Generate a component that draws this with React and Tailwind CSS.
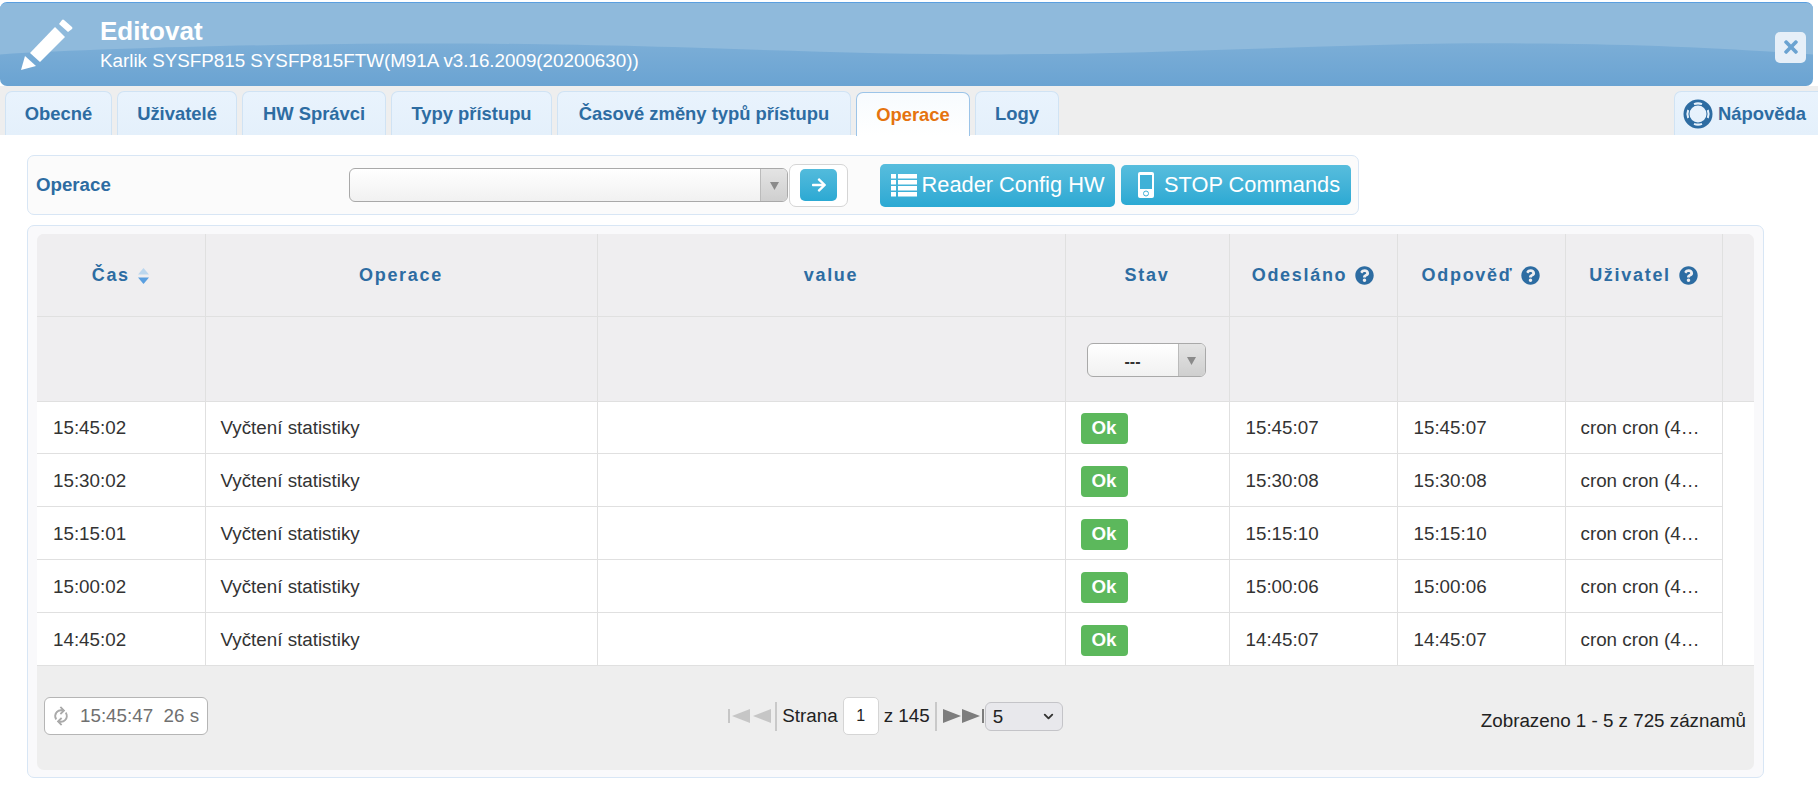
import { FaArrowRight, FaTimes, FaQuestionCircle, FaSync } from 'react-icons/fa';
import { ChevronDown } from 'lucide-react';

const columns = [168, 392, 468, 164, 168, 168, 157, 32];

const rows = [
  ['15:45:02', '15:45:07'],
  ['15:30:02', '15:30:08'],
  ['15:15:01', '15:15:10'],
  ['15:00:02', '15:00:06'],
  ['14:45:02', '14:45:07'],
];

const tabs = [
  ['Obecné', 'w-[107px]'],
  ['Uživatelé', 'w-[120px]'],
  ['HW Správci', 'w-[144px]'],
  ['Typy přístupu', 'w-[161px]'],
  ['Časové změny typů přístupu', 'w-[294px]'],
  ['Operace', 'w-[114px]'],
  ['Logy', 'w-[84px]'],
];

function Pencil() {
  return (
    <svg width="54" height="54" viewBox="0 0 54 54" className="shrink-0" fill="#fff">
      <path d="M1 52 L5 38 L16 48 Z" />
      <path d="M10 35 L35 9 L45 19 L20 44 Z" />
      <path d="M39 6 L42 2 Q43 1 44 2 L52 9 Q53 10 52 11 L48 14 Z" />
    </svg>
  );
}

function LifeRing() {
  return (
    <svg width="30" height="30" viewBox="0 0 30 30" className="shrink-0" fill="none">
      <circle cx="15" cy="15" r="11.500" stroke="#2d6ca2" strokeWidth="6" />
      <path d="M11 5.200A10.500 10.500 0 0 1 19 5.200M11 24.800A10.500 10.500 0 0 0 19 24.800M5.200 11A10.500 10.500 0 0 0 5.200 19M24.800 11A10.500 10.500 0 0 1 24.800 19" stroke="#e6f1fb" strokeWidth="2" />
    </svg>
  );
}

function ListIcon() {
  return (
    <svg width="26" height="23" viewBox="0 0 26 23" className="shrink-0" fill="#fff">
      {[0, 6, 12, 18].map((y) => (
        <g key={y}>
          <rect y={y} width="5" height="4.500" />
          <rect x="7" y={y} width="19" height="4.500" />
        </g>
      ))}
    </svg>
  );
}

function ComboBox({ width, text }) {
  return (
    <div className={`flex h-[34px] ${width} overflow-hidden rounded-md border border-[#a9a9a9] bg-gradient-to-b from-white to-[#f1f1f1]`}>
      <div className="flex-1 text-center text-[16px] leading-[36px] font-bold text-[#333]">{text}</div>
      <div className="flex w-[27px] items-center justify-center border-l border-[#bbb] bg-gradient-to-b from-[#e4e4e4] to-[#cfcfcf]">
        <svg width="9" height="9" viewBox="0 0 9 9"><path d="M0 1h9L4.500 9z" fill="#8a8a8a" /></svg>
      </div>
    </div>
  );
}

function HeadCell({ children, help }) {
  return (
    <th className="border-r border-b border-[#e0e0e0] pt-[2px] text-center text-[18px] font-bold tracking-[1.7px] text-[#2d6ca2]">
      <span className="inline-flex items-center gap-2">
        {children}
        {help && <FaQuestionCircle className="h-[19px] w-[19px]" />}
      </span>
    </th>
  );
}

function PagerArrow({ dark, flip, bar }) {
  const color = dark ? '#7d7d7d' : '#c6c6c6';
  return (
    <svg width={bar ? 23 : 19} height="16" viewBox={bar ? '0 0 23 16' : '0 0 19 16'} className={flip ? '-scale-x-100' : ''}>
      <path d="M0 1 L18 8 L0 15 Z" fill={color} />
      {bar && <rect x="20" y="1" width="2" height="14" fill={color} />}
    </svg>
  );
}

export default function App() {
  const cell = 'border-r border-b border-[#e0e0e0]';

  return (
    <div className="h-[786px] overflow-hidden bg-white font-['Liberation_Sans',Arial,sans-serif]">
      <div className="pt-[2px] pr-[5px]">
        <div className="relative flex h-[84px] items-center overflow-hidden rounded-[7px] border-t border-[#5a9fe0] bg-gradient-to-b from-[#8cb8db] to-[#6aa3d2] pl-[20px]">
          <svg className="absolute inset-0 h-full w-full" viewBox="0 0 1813 84" preserveAspectRatio="none">
            <path d="M0 0H1813V52C1700 44 1600 40 1450 41C1300 43 1150 52 1000 52C800 52 650 40 400 41C250 42 100 46 0 52Z" fill="#8fbadc" />
          </svg>
          <div className="relative">
            <Pencil />
          </div>
          <div className="relative ml-[26px] -mt-[2px] text-white">
            <div className="text-[26px] leading-[30px] font-bold">Editovat</div>
            <div className="mt-[4px] text-[18.800px] leading-[22px]">Karlik SYSFP815 SYSFP815FTW(M91A v3.16.2009(20200630))</div>
          </div>
          <button className="relative mt-[5px] mr-[7px] ml-auto flex h-[31px] w-[31px] items-center justify-center rounded-[5px] bg-[#e6eff8] text-[#6ba3d1]">
            <FaTimes className="h-[20px] w-[20px]" />
          </button>
        </div>
      </div>

      <div className="flex h-[49px] items-end bg-[#eeeeee] pl-[5px]">
        <div className="flex gap-[5px]">
          {tabs.map(([label, width]) => (
            <div
              key={label}
              className={`flex h-[44px] ${width} items-center justify-center rounded-t-[7px] border border-b-0 text-[18.400px] font-bold ${
                label === 'Operace'
                  ? 'relative top-px border-[#9cc4e8] bg-gradient-to-b from-[#f7fbfe] to-white text-[#e5730f]'
                  : 'border-[#d0e3f4] bg-gradient-to-b from-[#e9f3fd] to-[#e4f0fb] text-[#2d6ca2]'
              }`}
            >
              {label}
            </div>
          ))}
        </div>
        <div className="ml-auto flex h-[44px] w-[144px] items-center gap-[5px] rounded-tl-[7px] border-t border-l border-[#d0e3f4] bg-gradient-to-b from-[#e9f3fd] to-[#e4f0fb] pl-[8px] text-[18.400px] font-bold text-[#2d6ca2]">
          <LifeRing />
          Nápověda
        </div>
      </div>

      <div className="px-[27px]">
        <div className="mt-[20px] flex h-[60px] w-[1332px] items-center rounded-[7px] border border-[#d8e6f5] bg-[#fbfbfb] pl-[8px]">
          <div className="w-[313px] text-[18.700px] font-bold text-[#2d6ca2]">Operace</div>
          <ComboBox width="w-[439px]" text="" />
          <div className="ml-px flex h-[43px] w-[59px] items-center justify-center rounded-[7px] border border-[#d5d5d5] bg-white">
            <button className="flex h-[32px] w-[37px] items-center justify-center rounded-[5px] bg-gradient-to-b from-[#52bbdc] to-[#2ba9d3] text-white">
              <FaArrowRight className="h-[16px] w-[16px]" />
            </button>
          </div>
          <button className="ml-[32px] flex h-[43px] w-[235px] items-center justify-center gap-[5px] rounded-[5px] bg-gradient-to-b from-[#57bddd] to-[#2ba9d3] text-[21.800px] text-white">
            <ListIcon />
            Reader Config HW
          </button>
          <button className="ml-[6px] flex h-[40px] w-[230px] items-center justify-center gap-[10px] rounded-[5px] bg-gradient-to-b from-[#57bddd] to-[#2ba9d3] pl-[6px] text-[21.800px] text-white">
            <svg width="16" height="26" viewBox="0 0 16 26">
              <rect width="16" height="26" rx="2" fill="#fff" />
              <rect x="2" y="3" width="12" height="14" fill="#3fb1d7" />
              <circle cx="8" cy="21.500" r="2.500" fill="none" stroke="#3fb1d7" />
            </svg>
            STOP Commands
          </button>
        </div>

        <div className="mt-[10px] h-[553px] w-[1737px] rounded-[7px] border border-[#d8e6f5] bg-[#f9f9fb] px-[9px] pt-[8px]">
          <div className="flex h-[536px] flex-col overflow-hidden rounded-[7px] bg-[#eeeeee]">
            <table className="w-full table-fixed border-collapse text-[18.800px] text-[#333]">
              <colgroup>
                {columns.map((w, i) => (
                  <col key={i} style={{ width: w }} />
                ))}
              </colgroup>
              <thead className="bg-[#efeef0]">
                <tr className="h-[82px]">
                  <HeadCell>
                    Čas
                    <svg width="13" height="18" viewBox="0 0 13 18" className="-ml-[1px]">
                      <path d="M6.500 1 L12 7.500 H1 Z" fill="#bcd7ee" />
                      <path d="M1 10.500 H12 L6.500 17 Z" fill="#5a9fe0" />
                    </svg>
                  </HeadCell>
                  <HeadCell>Operace</HeadCell>
                  <HeadCell>value</HeadCell>
                  <HeadCell>Stav</HeadCell>
                  <HeadCell help>Odesláno</HeadCell>
                  <HeadCell help>Odpověď</HeadCell>
                  <HeadCell help>Uživatel</HeadCell>
                  <th />
                </tr>
                <tr className="h-[85px]">
                  <td className={cell} />
                  <td className={cell} />
                  <td className={cell} />
                  <td className={`${cell} pt-[3px] pl-[21px]`}>
                    <ComboBox width="w-[119px]" text="---" />
                  </td>
                  <td className={cell} />
                  <td className={cell} />
                  <td className={cell} />
                  <td className="border-b border-[#e0e0e0]" />
                </tr>
              </thead>
              <tbody className="bg-white">
                {rows.map(([time, sent], i) => (
                  <tr key={time} className="h-[52.900px]">
                    <td className={`${cell} pt-[2px] pl-[16px]`}>{time}</td>
                    <td className={`${cell} pt-[2px] pl-[15px]`}>Vyčtení statistiky</td>
                    <td className={cell} />
                    <td className={`${cell} pt-[2px] pl-[15px]`}>
                      <span className="flex h-[31px] w-[47px] items-center justify-center rounded-[4px] bg-[#5cb85c] font-bold text-white">Ok</span>
                    </td>
                    <td className={`${cell} pt-[2px] pl-[16px]`}>{sent}</td>
                    <td className={`${cell} pt-[2px] pl-[16px]`}>{sent}</td>
                    <td className={`${cell} truncate pt-[2px] pl-[15px]`}>cron cron (4…</td>
                    <td className={i === rows.length - 1 ? 'border-b border-[#e0e0e0]' : ''} />
                  </tr>
                ))}
              </tbody>
            </table>

            <div className="grid flex-1 grid-cols-[1fr_auto_1fr] items-center pr-[8px] pb-[3px] pl-[7px] text-[18.800px] text-[#222]">
              <div className="flex h-[38px] w-[164px] items-center gap-[12px] rounded-[6px] border border-[#b5b5b5] bg-white pl-[9px] whitespace-pre text-[#707070]">
                <FaSync className="h-[14px] w-[14px] -rotate-45 text-[#aaaaaa]" />
                <span>15:45:47  26 s</span>
              </div>
              <div className="flex items-center">
                <div className="flex items-center gap-[2px] pr-[4px]">
                  <PagerArrow flip bar />
                  <PagerArrow flip />
                </div>
                <div className="mr-[5px] h-[29px] w-[2px] bg-[#c9c9c9]" />
                <span>Strana</span>
                <input
                  readOnly
                  value="1"
                  className="mx-[5px] h-[38px] w-[36px] rounded-[5px] border border-[#d5d5d5] bg-white text-center text-[16px]"
                />
                <span>z 145</span>
                <div className="ml-[5px] h-[29px] w-[2px] bg-[#c9c9c9]" />
                <div className="flex items-center pl-[6px]">
                  <PagerArrow dark />
                  <PagerArrow dark bar />
                </div>
                <div className="relative">
                  <select className="h-[29px] w-[78px] appearance-none rounded-[6px] border border-[#c4c4c8] bg-[#e8e8ec] pl-[7px] text-[18.800px]">
                    <option>5</option>
                  </select>
                  <ChevronDown className="pointer-events-none absolute top-[7px] right-[7px] h-[15px] w-[15px] stroke-[3] text-[#333]" />
                </div>
              </div>
              <div className="pt-[10px] text-right">Zobrazeno 1 - 5 z 725 záznamů</div>
            </div>
          </div>
        </div>
      </div>
    </div>
  );
}
